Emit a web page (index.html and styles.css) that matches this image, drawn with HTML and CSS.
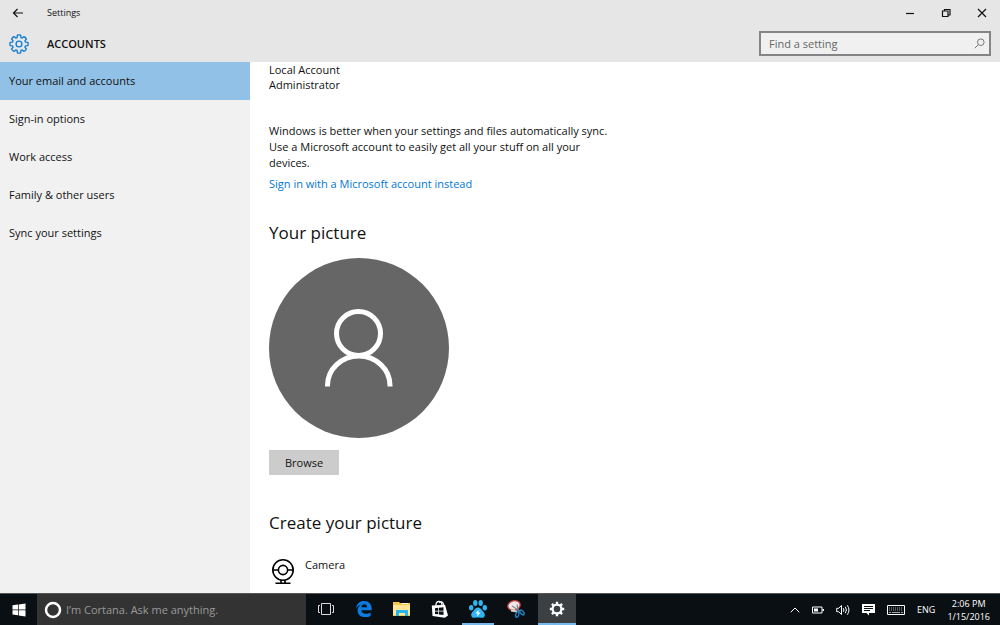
FILE: index.html
```html
<!DOCTYPE html>
<html lang="en">
<head>
    <meta charset="UTF-8">
    <meta name="viewport" content="width=device-width, initial-scale=1.0">
    <title>Settings</title>
    <link rel="stylesheet" href="styles.css">
</head>
<body>
    <header class="header">
        <div class="titlebar">
            <button class="back" aria-label="Back">
                <svg width="12" height="12" viewBox="0 0 12 12"><path d="M11 6H1.5M5.5 2L1.5 6l4 4"/></svg>
            </button>
            <span class="window-title">Settings</span>
            <div class="window-buttons">
                <button aria-label="Minimize"><svg width="10" height="10" viewBox="0 0 10 10"><path d="M1 5.500h8"/></svg></button>
                <button aria-label="Restore"><svg width="10" height="10" viewBox="0 0 10 10"><path d="M1.500 3h5.500v5.500h-5.500zM3.500 3V1.500h5.500v5.500H7"/></svg></button>
                <button aria-label="Close"><svg width="10" height="10" viewBox="0 0 10 10"><path d="M1 1l8 8M9 1L1 9"/></svg></button>
            </div>
        </div>
        <div class="heading">
            <svg class="heading-gear" width="20" height="20" viewBox="0 0 20 20">
                <path d="M8.100 3.600L8.300 1.200Q10 .6 11.700 1.200L11.900 3.600L13.200 4.100L15 2.600Q16.600 3.400 17.400 5L15.900 6.800L16.400 8.100L18.800 8.300Q19.400 10 18.800 11.700L16.400 11.900L15.900 13.200L17.400 15Q16.600 16.600 15 17.400L13.200 15.900L11.900 16.400L11.700 18.800Q10 19.400 8.300 18.800L8.100 16.400L6.800 15.900L5 17.400Q3.400 16.600 2.600 15L4.100 13.200L3.600 11.900L1.200 11.700Q.6 10 1.200 8.300L3.600 8.100L4.100 6.800L2.600 5Q3.400 3.400 5 2.600L6.800 4.100z"/>
                <circle cx="10" cy="10" r="2.900"/>
            </svg>
            <h1>ACCOUNTS</h1>
            <form class="search" role="search">
                <input type="text" placeholder="Find a setting" aria-label="Find a setting">
                <svg width="11" height="11" viewBox="0 0 11 11"><circle cx="6.800" cy="4.200" r="3.300"/><path d="M4.400 6.600L.8 10.200"/></svg>
            </form>
        </div>
    </header>

    <div class="page">
        <nav class="sidebar">
            <a href="#" class="active">Your email and accounts</a>
            <a href="#">Sign-in options</a>
            <a href="#">Work access</a>
            <a href="#">Family &amp; other users</a>
            <a href="#">Sync your settings</a>
        </nav>

        <main class="content">
            <p class="account">Local Account<br>Administrator</p>
            <p class="sync-info">Windows is better when your settings and files automatically sync. Use a Microsoft account to easily get all your stuff on all your devices.</p>
            <a href="#" class="signin-link">Sign in with a Microsoft account instead</a>

            <h2>Your picture</h2>
            <svg class="avatar" width="180" height="180" viewBox="0 0 180 180">
                <circle cx="90" cy="90" r="90" fill="#666"/>
                <circle cx="89.500" cy="75.500" r="22" fill="none" stroke="#fff" stroke-width="5"/>
                <path d="M58.500 128.500v-1a31.200 29.500 0 0 1 62.500 0v1" fill="none" stroke="#fff" stroke-width="5"/>
            </svg>
            <button class="browse">Browse</button>

            <h2>Create your picture</h2>
            <a href="#" class="camera">
                <svg width="28" height="28" viewBox="0 0 28 28">
                    <circle cx="14" cy="13" r="10.200"/>
                    <circle cx="14" cy="13" r="4.600"/>
                    <path d="M4 13h5.400M18.600 13H24M12 23v3M16 23v3M6.500 26.200h15"/>
                </svg>
                <span>Camera</span>
            </a>
        </main>
    </div>

    <footer class="taskbar">
        <button class="start" aria-label="Start">
            <svg width="14" height="14" viewBox="0 0 14 14"><path fill="#fff" d="M.5 2.300L6 1.500v5H.5zM6.700 1.400L13.500.5v6H6.700zM.5 7.200H6v5l-5.500-.7zM6.700 7.200h6.800v6.200l-6.800-1z"/></svg>
        </button>
        <label class="cortana">
            <svg width="18" height="18" viewBox="0 0 18 18"><circle cx="9" cy="9" r="7" fill="none" stroke="#fff" stroke-width="2.500"/></svg>
            <input type="text" placeholder="I’m Cortana. Ask me anything." aria-label="Ask Cortana">
        </label>
        <div class="apps">
            <button aria-label="Task View">
                <svg width="18" height="14" viewBox="0 0 18 14" fill="none" stroke="#ddd"><path d="M4.500 1.500h9v11h-9zM3 3.500H1.500v7H3M15 3.500h1.500v7H15"/></svg>
            </button>
            <button aria-label="Edge">
                <svg width="18" height="18" viewBox="0 0 18 18"><path fill="#0a7be0" d="M1 8.300C1.700 3.600 4.800 1 9 1c4.900 0 7.700 3.400 7.700 7.800v1.500H6.300c.2 2.600 2.400 3.500 4.600 3.500 1.800 0 3.400-.5 4.700-1.300v3.400c-1.500.8-3.300 1.200-5.300 1.200-4.800 0-7.700-2.700-7.700-6.700 0-2.800 1.500-4.900 4-6C4.400 4.800 2.400 6 1 8.300zM6.400 7.300h5.700c0-2-1-3-2.700-3S6.700 5.400 6.400 7.300z"/></svg>
            </button>
            <button aria-label="File Explorer">
                <svg width="18" height="16" viewBox="0 0 18 16"><path fill="#f3c94b" d="M0 1h6l1 1h10v13H0z"/><path fill="#ffe694" d="M0 4h17v10H0z"/><path fill="#28b4ec" d="M3 9h12v6h-3v-3H6v3H3z"/><path fill="#fff" d="M9 2h6v1H9z"/></svg>
            </button>
            <button aria-label="Store">
                <svg width="18" height="18" viewBox="0 0 18 18"><path fill="#fff" d="M.8 5.500L14 4.800l3 10.700-3.200 2.200L1.500 16z"/><path fill="none" stroke="#fff" stroke-width="1.200" d="M5 6C4.500.5 10.500-.5 11 5M8 3c2-2.500 4.500-1 4.500 2"/><path fill="#090f12" d="M4 8.200l3.300-.4v2.900H4zM8 7.700l4.500-.5v3.500H8zM4 11.400h3.300v2.900L4 13.900zM8 11.400h4.500v3.500L8 14.400z"/></svg>
            </button>
            <button class="running" aria-label="Baidu">
                <svg width="20" height="20" viewBox="0 0 20 20"><g fill="#30b5f2"><ellipse cx="3.200" cy="8.800" rx="2.200" ry="2.700"/><ellipse cx="7.300" cy="4" rx="2.200" ry="3"/><ellipse cx="12.700" cy="4" rx="2.200" ry="3"/><ellipse cx="16.800" cy="8.800" rx="2.200" ry="2.700"/><path d="M10 8.500c2.300 0 3.300 2 4.700 3.600 1.800 2 2.400 3 2 4.600-.4 1.700-2 2.400-3.700 2.100-2-.3-4-.3-6 0-1.700.3-3.300-.4-3.700-2.100-.4-1.600.2-2.600 2-4.600C6.700 10.500 7.700 8.500 10 8.500z"/></g><path fill="#fff" d="M10.800 10.500L7.500 14.600h2.200l-.9 3.200 3.700-4.400h-2.300z"/></svg>
            </button>
            <button aria-label="Snipping Tool">
                <svg width="20" height="20" viewBox="0 0 20 20"><ellipse cx="8" cy="6.500" rx="6.300" ry="4.700" fill="#ece6e6" stroke="#c23a3a" stroke-width="1.300" transform="rotate(-15 8 6.500)"/><path d="M5 11.500l6 1" stroke="#d8d0d0" stroke-width="2"/><path d="M6 7l8 5M11 5.500l1.500 7" fill="none" stroke="#87878d" stroke-width="1.300"/><g fill="none" stroke="#2383c4" stroke-width="1.400"><ellipse cx="11.300" cy="15.500" rx="1.500" ry="2.800" transform="rotate(15 11.300 15.500)"/><ellipse cx="16" cy="13.500" rx="1.500" ry="2.800" transform="rotate(-40 16 13.500)"/></g></svg>
            </button>
            <button class="running current" aria-label="Settings">
                <svg width="16" height="16" viewBox="0 0 16 16" fill="none" stroke="#fff"><circle cx="8" cy="8" r="4.400" stroke-width="2.200"/><path stroke-width="2.400" d="M8 3V.8M8 13v2.200M3 8H.8M13 8h2.200M4.500 4.500L2.900 2.900M11.500 4.500l1.600-1.600M4.500 11.500l-1.600 1.600M11.500 11.500l1.600 1.600"/></svg>
            </button>
        </div>
        <div class="tray">
            <svg width="10" height="6" viewBox="0 0 10 6"><path d="M.7 5.300L5 1l4.300 4.300"/></svg>
            <svg width="12" height="8" viewBox="0 0 12 8"><path d="M.5 1h9.500v6H.5z"/><path fill="#fff" stroke="none" d="M2 2.500h4v3H2zM10.500 3H12v2h-1.500z"/></svg>
            <svg width="14" height="12" viewBox="0 0 14 12"><path d="M.7 4.300h2L5.500 1.500v9L2.700 7.700h-2zM7.300 4.200q1.300 1.800 0 3.600M9.300 2.800q2.300 3.200 0 6.400M11.300 1.300q3.300 4.700 0 9.400"/></svg>
            <svg width="13" height="13" viewBox="0 0 13 13"><path fill="#fff" stroke="none" d="M0 1h13v9H7v2.500L4.500 10H0z"/><path stroke="#0a1013" d="M2 3.500h9M2 5.500h9M2 7.500h6"/></svg>
            <svg width="18" height="10" viewBox="0 0 18 10"><path d="M.5.500h17v9H.5z"/><path stroke="#aaa" stroke-dasharray="1 1" d="M2 3h14M2 5h14"/><path stroke="#aaa" d="M2 7.500h2M5 7.500h8M14 7.500h2"/></svg>
            <span class="lang">ENG</span>
            <time class="clock">2:06 PM<br>1/15/2016</time>
        </div>
    </footer>
</body>
</html>
```
FILE: styles.css
```css
* {
    box-sizing: border-box;
}

body {
    margin: 0;
    height: 100vh;
    display: flex;
    flex-direction: column;
    overflow: hidden;
    background: #fff;
    color: #111;
    font-family: "Open Sans", "Noto Sans", sans-serif;
    font-size: 11px;
    line-height: 16px;
}

button,
input {
    font: inherit;
    color: inherit;
    border: none;
    padding: 0;
    margin: 0;
    background: none;
}

svg {
    display: block;
    flex-shrink: 0;
}

h1,
h2,
p {
    margin: 0;
}

a {
    color: inherit;
    text-decoration: none;
}

/* header */
.header {
    background: #e6e6e6;
    flex-shrink: 0;
}

.header svg {
    fill: none;
    stroke: #111;
    stroke-width: 1.2;
}

.titlebar {
    display: flex;
    align-items: center;
    height: 25px;
}

.back {
    width: 36px;
    height: 25px;
    display: flex;
    align-items: center;
    justify-content: center;
}

.window-title {
    padding-left: 11px;
    font-size: 9px;
}

.window-buttons {
    display: flex;
    margin-left: auto;
}

.window-buttons button {
    width: 36px;
    height: 25px;
    display: flex;
    align-items: center;
    justify-content: center;
}

.heading {
    display: flex;
    align-items: center;
    height: 37px;
    padding: 0 9px;
}

.header .heading-gear {
    stroke: #0f7bd3;
    stroke-width: 1.3;
    stroke-linejoin: round;
}

.heading h1 {
    margin-left: 18px;
    font-size: 11px;
    font-weight: 600;
}

.search {
    display: flex;
    align-items: center;
    width: 232px;
    height: 25px;
    margin-left: auto;
    padding: 0 4px 0 8px;
    border: 2px solid #858585;
    background: #f0f0f0;
}

.search input {
    flex: 1;
    min-width: 0;
    outline: none;
}

.search input::placeholder {
    color: #666;
}

.header .search svg {
    stroke: #777;
    stroke-width: 1;
}

/* page */
.page {
    flex: 1;
    min-height: 0;
    display: flex;
}

.sidebar {
    width: 250px;
    flex-shrink: 0;
    background: #f1f1f1;
}

.sidebar a {
    display: flex;
    align-items: center;
    height: 38px;
    padding-left: 9px;
}

.sidebar .active {
    background: #91c1e7;
}

.content {
    flex: 1;
    overflow: hidden;
    padding-left: 19px;
}

.account {
    line-height: 15px;
}

.sync-info {
    max-width: 350px;
    margin-top: 31px;
}

.signin-link {
    display: block;
    margin-top: 5px;
    color: #0078d7;
}

h2 {
    margin-top: 28px;
    font-size: 17px;
    font-weight: 400;
    line-height: 26px;
}

.avatar {
    margin-top: 12px;
}

.browse {
    display: block;
    width: 70px;
    height: 25px;
    margin-top: 12px;
    background: #ccc;
}

.browse + h2 {
    margin-top: 35px;
}

.camera {
    display: flex;
    gap: 8px;
    margin-top: 21px;
}

.camera svg {
    fill: none;
    stroke: #000;
    stroke-width: 1.6;
}

/* taskbar */
.taskbar {
    display: flex;
    flex-shrink: 0;
    height: 32px;
    border-top: 1px solid #555;
    background: #090f12;
    color: #fff;
}

.start {
    width: 37px;
    display: flex;
    align-items: center;
    justify-content: center;
}

.cortana {
    display: flex;
    align-items: center;
    gap: 4px;
    width: 269px;
    padding-left: 7px;
    background: #333;
}

.cortana input {
    flex: 1;
    min-width: 0;
    outline: none;
}

.cortana input::placeholder {
    color: #9a9a9a;
}

.apps {
    display: flex;
    gap: 6px;
    padding-left: 4px;
}

.apps button {
    width: 32px;
    display: flex;
    align-items: center;
    justify-content: center;
    border-bottom: 2px solid transparent;
}

.apps .running {
    border-color: #76b9ed;
}

.apps .current {
    width: 38px;
    background: #3c4042;
}

.tray {
    display: flex;
    align-items: center;
    gap: 12px;
    margin-left: auto;
    padding-right: 10px;
}

.tray svg {
    fill: none;
    stroke: #fff;
}

.lang,
.clock {
    font-size: 9px;
}

.clock {
    line-height: 13px;
    text-align: center;
}
```
